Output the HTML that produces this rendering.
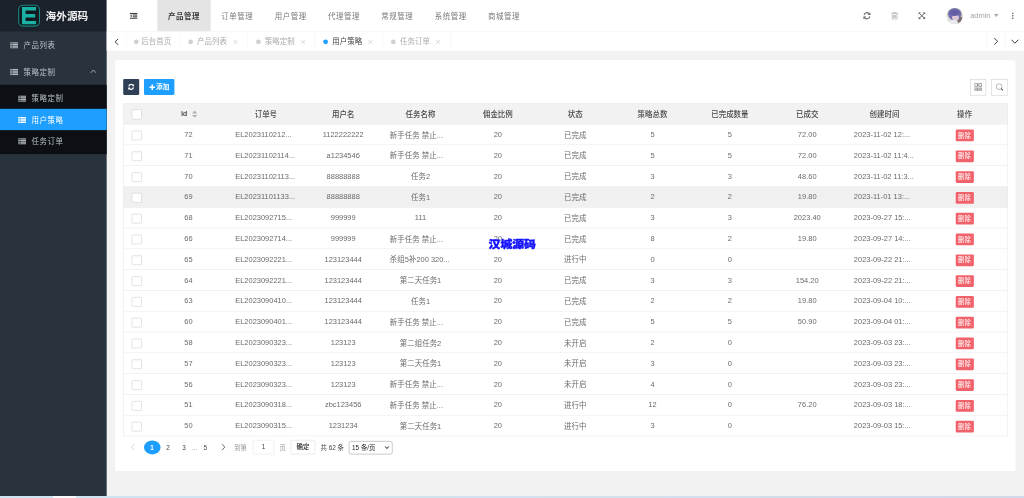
<!DOCTYPE html>
<html lang="zh-CN">
<head>
<meta charset="utf-8">
<title>用户策略</title>
<style>
*{box-sizing:border-box;margin:0;padding:0}
html,body{width:1024px;height:498px;overflow:hidden;background:#f2f2f2}
body{font-family:"Liberation Sans","Noto Sans CJK SC",sans-serif;font-size:14px;color:#666}
#app{filter:blur(0.8px);position:absolute;left:0;top:0;width:1920px;height:936px;transform:scale(0.533333);transform-origin:0 0;background:#f2f2f2;overflow:hidden}
.abs{position:absolute}
i{font-style:normal}
/* sidebar */
#side{position:absolute;left:0;top:-1px;width:200px;height:936px;background:#28333e}
#logo{position:absolute;left:0;top:0;width:200px;height:60px;background:#1b222b}
#logo .box{position:absolute;left:34px;top:10px;width:41px;height:41px;border:2px solid #17877f;border-radius:9px;background:#121a20}
#logo .ttl{position:absolute;left:85.5px;top:1.5px;height:60px;line-height:60px;font-size:20px;font-weight:700;color:#f1f1f1;white-space:nowrap}
.mi{position:absolute;left:0;width:200px;height:50px;line-height:52px;color:#bcc1c7;font-size:14px;white-space:nowrap;letter-spacing:1px}
.mi svg{position:absolute;left:19.3px;top:19.5px}
.mi span{position:absolute;left:44px;top:0}
#sub{position:absolute;left:0;top:160px;width:200px;height:130px;background:#0c0f13}
.si{position:absolute;left:0;width:200px;height:40px;line-height:42px;color:#bcc1c7;font-size:14px;white-space:nowrap;letter-spacing:1px}
.si svg{position:absolute;left:34.3px;top:14.5px}
.si span{position:absolute;left:59px;top:0}
.si.on{background:#1e9fff;color:#fff}
/* header */
#hdr{position:absolute;left:200px;top:-1px;width:1720px;height:60px;background:#fff}
.nav{position:absolute;top:0;width:100px;height:60px;line-height:62px;text-align:center;font-size:14px;letter-spacing:1px;color:#7a7a7a;white-space:nowrap}
.nav.on{background:#e4e4e4;color:#3a3a3a;font-weight:700}
/* tabs */
#tabs{position:absolute;left:200px;top:59px;width:1720px;height:36px;background:#fff;border-top:1px solid #f4f4f4}
.tb{position:absolute;top:0;height:35px;line-height:34px;font-size:14px;color:#acacac;border-right:1px solid #f4f4f4;white-space:nowrap}
.tb .dot{position:absolute;top:13.5px;width:9px;height:9px;border-radius:50%;background:#cfcfcf}
.tb .tx{position:absolute;top:0}
.tb .x{position:absolute;top:13.5px}
.tb.on{color:#444}
.tb.on .dot{background:#1e9fff}
.ctl{position:absolute;top:0;width:35px;height:35px}
/* card */
#card{position:absolute;left:216px;top:113px;width:1688px;height:770px;background:#fff;border-radius:3px}
.btn{position:absolute;top:148px;height:30px;border-radius:2px}
.tool{position:absolute;top:148.5px;width:30px;height:30px;border:1px solid #ccc;border-radius:0;background:#fff}
/* table */
#tbg{position:absolute;left:231px;top:193.5px;width:1659px;height:625px;background:#fff}
#tbg i{position:absolute;left:0;width:1659px;height:1px;background:#e9e9e9}
#tbg .vl{top:0;width:1px;height:625px}
#tbg .hd{top:0;height:39px;background:#f2f2f2}
#tbg .hv{top:156px;height:39px;background:#f0f0f0}
#tbl{position:absolute;left:231px;top:195.2px;width:1659px;border-collapse:collapse;table-layout:fixed;font-size:14px;color:#6a6a6a}
#tbl th,#tbl td{height:39px;text-align:center;white-space:nowrap;font-weight:400;padding:0 0 1px 0}
#tbl th{color:#484848;font-weight:500;height:38px;padding-bottom:2px}
#tbl th .cb{margin-top:3px}
#tbl td.tr{text-align:left;padding-left:15px}
.c0{width:50px;text-align:left!important}
.c11{width:159px;position:relative;left:-2px}
.cb{display:block;width:19px;height:18.5px;border:1px solid #cbcbcb;border-radius:2px;background:#fff;margin:3.5px 0 0 15.5px}
.idh{display:inline-block;position:relative;padding-right:19px;left:1.5px;font-weight:400;-webkit-text-stroke:0.4px #484848}
.sort{position:absolute;right:0;top:2px}
.del{display:inline-block;width:34px;height:22px;line-height:22px;background:#f2626b;color:#fff;font-size:12px;font-weight:400;border-radius:2px;vertical-align:middle;position:relative;top:2.2px;left:0}
/* pager */
#pg{position:absolute;left:231px;top:823px;height:30px;font-size:12px;color:#666;white-space:nowrap}
#pg .a{position:absolute;top:0.7px;height:30px;line-height:30px}
#wm{position:absolute;left:916px;top:446px;font-size:19.5px;font-weight:900;color:#1414ff;white-space:nowrap;line-height:22px;font-family:"Noto Sans CJK SC",sans-serif;transform:scaleX(1.14);transform-origin:0 0;-webkit-text-stroke:0.8px #1414ff}
#taskbar{position:absolute;left:0;top:495.6px;width:1024px;height:3px;background:linear-gradient(90deg,#cde5ef,#d3e2ee 50%,#d2d9e8)}
</style>
</head>
<body>
<div id="app">
  <div id="side">
    <div id="logo">
      <div class="box"><svg class="abs" style="left:5px;top:2px" width="27" height="33" viewBox="0 0 27 33"><path d="M0 0H27V6.5H7V13.2H25V19.7H7V26.5H27V33H0Z" fill="#1ab3a3"/></svg></div>
      <div class="ttl">海外源码</div>
    </div>
    <div class="mi" style="top:60px"><svg width="15" height="12" viewBox="0 0 15 12"><g fill="#b4b9bf"><rect x="0" y="0" width="15" height="2.4"/><rect x="0" y="3.2" width="15" height="2.4"/><rect x="0" y="6.4" width="15" height="2.4"/><rect x="0" y="9.6" width="15" height="2.4"/></g><rect x="3.2" y="0" width="0.9" height="12" fill="#28333e"/></svg><span>产品列表</span></div>
    <div class="mi" style="top:110px"><svg width="15" height="12" viewBox="0 0 15 12"><g fill="#b4b9bf"><rect x="0" y="0" width="15" height="2.4"/><rect x="0" y="3.2" width="15" height="2.4"/><rect x="0" y="6.4" width="15" height="2.4"/><rect x="0" y="9.6" width="15" height="2.4"/></g><rect x="3.2" y="0" width="0.9" height="12" fill="#28333e"/></svg><span>策略定制</span>
      <svg style="left:169px;top:20px" width="12" height="9" viewBox="0 0 12 9"><path d="M1 7.5L6 2.2L11 7.5" fill="none" stroke="#b8bec4" stroke-width="1.6"/></svg></div>
    <div id="sub">
      <div class="si" style="top:5px"><svg width="15" height="12" viewBox="0 0 15 12"><g fill="#b4b9bf"><rect x="0" y="0" width="15" height="2.4"/><rect x="0" y="3.2" width="15" height="2.4"/><rect x="0" y="6.4" width="15" height="2.4"/><rect x="0" y="9.6" width="15" height="2.4"/></g><rect x="3.2" y="0" width="0.9" height="12" fill="#0c0f13"/></svg><span>策略定制</span></div>
      <div class="si on" style="top:45px"><svg width="15" height="12" viewBox="0 0 15 12"><g fill="#fff"><rect x="0" y="0" width="15" height="2.4"/><rect x="0" y="3.2" width="15" height="2.4"/><rect x="0" y="6.4" width="15" height="2.4"/><rect x="0" y="9.6" width="15" height="2.4"/></g><rect x="3.2" y="0" width="0.9" height="12" fill="#1e9fff"/></svg><span>用户策略</span></div>
      <div class="si" style="top:85px"><svg width="15" height="12" viewBox="0 0 15 12"><g fill="#b4b9bf"><rect x="0" y="0" width="15" height="2.4"/><rect x="0" y="3.2" width="15" height="2.4"/><rect x="0" y="6.4" width="15" height="2.4"/><rect x="0" y="9.6" width="15" height="2.4"/></g><rect x="3.2" y="0" width="0.9" height="12" fill="#0c0f13"/></svg><span>任务订单</span></div>
    </div>
  </div>

  <div id="hdr">
    <svg class="abs" style="left:43.4px;top:24.6px" width="14.8" height="11.8" viewBox="0 0 14.8 11.8"><g fill="#3c3c3c"><rect x="0" y="0" width="14.8" height="2.5"/><rect x="0" y="9.3" width="14.8" height="2.5"/></g><g fill="#5a5a5a"><rect x="6" y="3.2" width="8.8" height="2.2"/><rect x="6" y="6.3" width="8.8" height="2.2"/><path d="M4.2 3.2V8.5L0.5 5.85Z"/></g></svg>
    <div class="nav on" style="left:95px">产品管理</div>
    <div class="nav" style="left:195px">订单管理</div>
    <div class="nav" style="left:295px">用户管理</div>
    <div class="nav" style="left:395px">代理管理</div>
    <div class="nav" style="left:495px">常规管理</div>
    <div class="nav" style="left:595px">系统管理</div>
    <div class="nav" style="left:695px">商城管理</div>
    <!-- right icons -->
    <svg class="abs" style="left:1418px;top:23px" width="15" height="15" viewBox="0 0 15 15"><g fill="none" stroke="#666" stroke-width="2"><path d="M2 6.2A5.6 5.6 0 0 1 12.2 4.2"/><path d="M13 8.8A5.6 5.6 0 0 1 2.8 10.8"/></g><path d="M14 1V6H9Z" fill="#5e5e5e"/><path d="M1 14V9H6Z" fill="#5e5e5e"/></svg>
    <svg class="abs" style="left:1471px;top:23px" width="13" height="15" viewBox="0 0 13 15"><g fill="none" stroke="#a8a8a8" stroke-width="1.3"><path d="M0.5 3H12.5"/><path d="M4.3 3V1H8.7V3"/><path d="M1.8 3.2L2.3 14H10.7L11.2 3.2"/><path d="M4.7 5.8V11.6M6.5 5.8V11.6M8.3 5.8V11.6"/></g></svg>
    <svg class="abs" style="left:1522px;top:24px" width="13" height="13" viewBox="0 0 14 14"><path d="M2.5 2.5L11.5 11.5M11.5 2.5L2.5 11.5" stroke="#555" stroke-width="1.9" fill="none"/><g fill="#555"><path d="M0 0H5.2L0 5.2Z"/><path d="M14 0V5.2L8.8 0Z"/><path d="M0 14V8.8L5.2 14Z"/><path d="M14 14H8.8L14 8.8Z"/></g></svg>
    <div class="abs" style="left:1575px;top:15.5px;width:30px;height:30px;border-radius:50%;overflow:hidden;background:#c3cbb9">
      <svg class="abs" style="left:0;top:0" width="30" height="30" viewBox="0 0 30 30"><rect width="30" height="30" fill="#c6cdbd"/><ellipse cx="3" cy="18" rx="5" ry="5" fill="#e3eadc"/><ellipse cx="26" cy="24" rx="6" ry="7" fill="#7d6c70"/><ellipse cx="15" cy="11.5" rx="12.5" ry="11.5" fill="#7670b2"/><ellipse cx="16.5" cy="18" rx="6.3" ry="5.8" fill="#dccad6"/><ellipse cx="15" cy="9" rx="9.5" ry="6" fill="#655fa5"/><ellipse cx="12" cy="28.5" rx="9" ry="6" fill="#ecebf3"/></svg>
    </div>
    <div class="abs" style="left:1619px;top:0;height:60px;line-height:60px;font-size:14px;color:#a3a3a3">admin</div>
    <svg class="abs" style="left:1663px;top:27px" width="10" height="6" viewBox="0 0 10 6"><path d="M0 0H10L5 6Z" fill="#b0b0b0"/></svg>
    <svg class="abs" style="left:1696.5px;top:24px" width="4" height="13" viewBox="0 0 4 13"><g fill="#444"><circle cx="2" cy="1.8" r="1.4"/><circle cx="2" cy="6.5" r="1.4"/><circle cx="2" cy="11.2" r="1.4"/></g></svg>
  </div>

  <div id="tabs">
    <div class="ctl" style="left:0;border-right:1px solid #f4f4f4;width:37px"><svg class="abs" style="left:13.5px;top:11.5px" width="9" height="13" viewBox="0 0 9 13"><path d="M7.5 1L2 6.5L7.5 12" fill="none" stroke="#2b3340" stroke-width="1.8"/></svg></div>
    <div class="tb" style="left:37px;width:100px"><i class="dot" style="left:14px"></i><span class="tx" style="left:28px">后台首页</span></div>
    <div class="tb" style="left:137px;width:127px"><i class="dot" style="left:15.5px"></i><span class="tx" style="left:32.5px">产品列表</span><svg class="x" style="left:99.5px" width="9" height="9" viewBox="0 0 9 9"><path d="M1 1L8 8M8 1L1 8" stroke="#c4c4c4" stroke-width="1.2"/></svg></div>
    <div class="tb" style="left:264px;width:126.5px"><i class="dot" style="left:15.5px"></i><span class="tx" style="left:32.5px">策略定制</span><svg class="x" style="left:99.5px" width="9" height="9" viewBox="0 0 9 9"><path d="M1 1L8 8M8 1L1 8" stroke="#c4c4c4" stroke-width="1.2"/></svg></div>
    <div class="tb on" style="left:390.5px;width:127px"><i class="dot" style="left:15.5px"></i><span class="tx" style="left:32.5px">用户策略</span><svg class="x" style="left:99.5px" width="9" height="9" viewBox="0 0 9 9"><path d="M1 1L8 8M8 1L1 8" stroke="#c4c4c4" stroke-width="1.2"/></svg></div>
    <div class="tb" style="left:517.5px;width:127.5px"><i class="dot" style="left:15.5px"></i><span class="tx" style="left:32.5px">任务订单</span><svg class="x" style="left:99.5px" width="9" height="9" viewBox="0 0 9 9"><path d="M1 1L8 8M8 1L1 8" stroke="#c4c4c4" stroke-width="1.2"/></svg></div>
    <div class="ctl" style="left:1650px;border-left:1px solid #f4f4f4"><svg class="abs" style="left:12px;top:10px" width="9" height="15" viewBox="0 0 9 15"><path d="M1.5 1.5L7.5 7.5L1.5 13.5" fill="none" stroke="#333" stroke-width="1.8"/></svg></div>
    <div class="ctl" style="left:1685px;border-left:1px solid #f4f4f4"><svg class="abs" style="left:9px;top:12.5px" width="16" height="10" viewBox="0 0 16 10"><path d="M1.5 1.5L8 8L14.5 1.5" fill="none" stroke="#333" stroke-width="1.8"/></svg></div>
  </div>

  <div id="card"></div>
  <div class="btn" style="left:231px;width:30px;background:#2f4056"><svg class="abs" style="left:9px;top:9px" width="12" height="12" viewBox="0 0 15 15"><g fill="none" stroke="#fff" stroke-width="3"><path d="M2 6.2A5.6 5.6 0 0 1 12.2 4.2"/><path d="M13 8.8A5.6 5.6 0 0 1 2.8 10.8"/></g><path d="M14.5 0.5V6H9Z" fill="#fff"/><path d="M0.5 14.5V9H6Z" fill="#fff"/></svg></div>
  <div class="btn" style="left:270px;width:57px;background:#1e9fff;color:#fff;font-size:12px;line-height:30px;font-weight:700"><svg class="abs" style="left:9.5px;top:9.5px" width="11" height="11" viewBox="0 0 10 10"><path d="M3.7 0H6.3V3.7H10V6.3H6.3V10H3.7V6.3H0V3.7H3.7Z" fill="#fff"/></svg><span class="abs" style="left:22.5px;top:0;font-size:12.5px">添加</span></div>
  <div class="tool" style="left:1819px"><svg class="abs" style="left:7px;top:6px" width="14" height="15" viewBox="0 0 14 15"><g fill="none" stroke="#555" stroke-width="1.2"><rect x="0.6" y="0.6" width="5" height="5"/><rect x="8.4" y="0.6" width="5" height="5"/><path d="M0.6 8V14.5M3.1 8V14.5M5.6 8V14.5M8.4 8V14.5M10.9 8V14.5M13.4 8V14.5"/></g></svg></div>
  <div class="tool" style="left:1859px"><svg class="abs" style="left:7px;top:6px" width="15" height="15" viewBox="0 0 15 15"><circle cx="6.3" cy="6.3" r="5.4" fill="none" stroke="#888" stroke-width="1.2"/><path d="M10.3 10.3L13.5 13.5" stroke="#555" stroke-width="2.2"/></svg></div>

  <div id="tbg"><i class="hd"></i><i class="hv"></i><i style="top:0px"></i><i style="top:38px"></i><i style="top:77px"></i><i style="top:116px"></i><i style="top:155px"></i><i style="top:194px"></i><i style="top:233px"></i><i style="top:272px"></i><i style="top:311px"></i><i style="top:350px"></i><i style="top:389px"></i><i style="top:428px"></i><i style="top:467px"></i><i style="top:506px"></i><i style="top:545px"></i><i style="top:584px"></i><i style="top:623px"></i><i class="vl" style="left:0"></i><i class="vl" style="left:1658px"></i></div>
  <table id="tbl">
    <thead><tr><th class="c0"><i class="cb"></i></th><th class="c1"><span class="idh">id<svg class="sort" width="10" height="14" viewBox="0 0 10 14"><path d="M0 5.6 L5 0 L10 5.6Z" fill="#b2b2b2"/><path d="M0 8.4 L5 14 L10 8.4Z" fill="#b2b2b2"/></svg></span></th><th class="c2">订单号</th><th class="c3">用户名</th><th class="c4">任务名称</th><th class="c5">佣金比例</th><th class="c6">状态</th><th class="c7">策略总数</th><th class="c8">已完成数量</th><th class="c9">已成交</th><th class="c10">创建时间</th><th class="c11">操作</th></tr></thead>
    <tbody>
<tr><td class="c0"><i class="cb"></i></td><td class="c1">72</td><td class="c2 tr">EL2023110212...</td><td class="c3">1122222222</td><td class="c4 tr">新手任务 禁止...</td><td class="c5">20</td><td class="c6">已完成</td><td class="c7">5</td><td class="c8">5</td><td class="c9">72.00</td><td class="c10 tr">2023-11-02 12:...</td><td class="c11"><span class="del">删除</span></td></tr>
<tr><td class="c0"><i class="cb"></i></td><td class="c1">71</td><td class="c2 tr">EL20231102114...</td><td class="c3">a1234546</td><td class="c4 tr">新手任务 禁止...</td><td class="c5">20</td><td class="c6">已完成</td><td class="c7">5</td><td class="c8">5</td><td class="c9">72.00</td><td class="c10 tr">2023-11-02 11:4...</td><td class="c11"><span class="del">删除</span></td></tr>
<tr><td class="c0"><i class="cb"></i></td><td class="c1">70</td><td class="c2 tr">EL20231102113...</td><td class="c3">88888888</td><td class="c4">任务2</td><td class="c5">20</td><td class="c6">已完成</td><td class="c7">3</td><td class="c8">3</td><td class="c9">48.60</td><td class="c10 tr">2023-11-02 11:3...</td><td class="c11"><span class="del">删除</span></td></tr>
<tr class="hov"><td class="c0"><i class="cb"></i></td><td class="c1">69</td><td class="c2 tr">EL20231101133...</td><td class="c3">88888888</td><td class="c4">任务1</td><td class="c5">20</td><td class="c6">已完成</td><td class="c7">2</td><td class="c8">2</td><td class="c9">19.80</td><td class="c10 tr">2023-11-01 13:...</td><td class="c11"><span class="del">删除</span></td></tr>
<tr><td class="c0"><i class="cb"></i></td><td class="c1">68</td><td class="c2 tr">EL2023092715...</td><td class="c3">999999</td><td class="c4">111</td><td class="c5">20</td><td class="c6">已完成</td><td class="c7">3</td><td class="c8">3</td><td class="c9">2023.40</td><td class="c10 tr">2023-09-27 15:...</td><td class="c11"><span class="del">删除</span></td></tr>
<tr><td class="c0"><i class="cb"></i></td><td class="c1">66</td><td class="c2 tr">EL2023092714...</td><td class="c3">999999</td><td class="c4 tr">新手任务 禁止...</td><td class="c5">20</td><td class="c6">已完成</td><td class="c7">8</td><td class="c8">2</td><td class="c9">19.80</td><td class="c10 tr">2023-09-27 14:...</td><td class="c11"><span class="del">删除</span></td></tr>
<tr><td class="c0"><i class="cb"></i></td><td class="c1">65</td><td class="c2 tr">EL2023092221...</td><td class="c3">123123444</td><td class="c4 tr">杀组5补200 320...</td><td class="c5">20</td><td class="c6">进行中</td><td class="c7">0</td><td class="c8">0</td><td class="c9"></td><td class="c10 tr">2023-09-22 21:...</td><td class="c11"><span class="del">删除</span></td></tr>
<tr><td class="c0"><i class="cb"></i></td><td class="c1">64</td><td class="c2 tr">EL2023092221...</td><td class="c3">123123444</td><td class="c4">第二天任务1</td><td class="c5">20</td><td class="c6">已完成</td><td class="c7">3</td><td class="c8">3</td><td class="c9">154.20</td><td class="c10 tr">2023-09-22 21:...</td><td class="c11"><span class="del">删除</span></td></tr>
<tr><td class="c0"><i class="cb"></i></td><td class="c1">63</td><td class="c2 tr">EL2023090410...</td><td class="c3">123123444</td><td class="c4">任务1</td><td class="c5">20</td><td class="c6">已完成</td><td class="c7">2</td><td class="c8">2</td><td class="c9">19.80</td><td class="c10 tr">2023-09-04 10:...</td><td class="c11"><span class="del">删除</span></td></tr>
<tr><td class="c0"><i class="cb"></i></td><td class="c1">60</td><td class="c2 tr">EL2023090401...</td><td class="c3">123123444</td><td class="c4 tr">新手任务 禁止...</td><td class="c5">20</td><td class="c6">已完成</td><td class="c7">5</td><td class="c8">5</td><td class="c9">50.90</td><td class="c10 tr">2023-09-04 01:...</td><td class="c11"><span class="del">删除</span></td></tr>
<tr><td class="c0"><i class="cb"></i></td><td class="c1">58</td><td class="c2 tr">EL2023090323...</td><td class="c3">123123</td><td class="c4">第二组任务2</td><td class="c5">20</td><td class="c6">未开启</td><td class="c7">2</td><td class="c8">0</td><td class="c9"></td><td class="c10 tr">2023-09-03 23:...</td><td class="c11"><span class="del">删除</span></td></tr>
<tr><td class="c0"><i class="cb"></i></td><td class="c1">57</td><td class="c2 tr">EL2023090323...</td><td class="c3">123123</td><td class="c4">第二天任务1</td><td class="c5">20</td><td class="c6">未开启</td><td class="c7">3</td><td class="c8">0</td><td class="c9"></td><td class="c10 tr">2023-09-03 23:...</td><td class="c11"><span class="del">删除</span></td></tr>
<tr><td class="c0"><i class="cb"></i></td><td class="c1">56</td><td class="c2 tr">EL2023090323...</td><td class="c3">123123</td><td class="c4 tr">新手任务 禁止...</td><td class="c5">20</td><td class="c6">未开启</td><td class="c7">4</td><td class="c8">0</td><td class="c9"></td><td class="c10 tr">2023-09-03 23:...</td><td class="c11"><span class="del">删除</span></td></tr>
<tr><td class="c0"><i class="cb"></i></td><td class="c1">51</td><td class="c2 tr">EL2023090318...</td><td class="c3">zbc123456</td><td class="c4 tr">新手任务 禁止...</td><td class="c5">20</td><td class="c6">进行中</td><td class="c7">12</td><td class="c8">0</td><td class="c9">76.20</td><td class="c10 tr">2023-09-03 18:...</td><td class="c11"><span class="del">删除</span></td></tr>
<tr><td class="c0"><i class="cb"></i></td><td class="c1">50</td><td class="c2 tr">EL2023090315...</td><td class="c3">1231234</td><td class="c4">第二天任务1</td><td class="c5">20</td><td class="c6">进行中</td><td class="c7">3</td><td class="c8">0</td><td class="c9"></td><td class="c10 tr">2023-09-03 15:...</td><td class="c11"><span class="del">删除</span></td></tr>
    </tbody>
  </table>

  <div id="wm">汉城源码</div>

  <div id="pg">
    <svg class="abs" style="left:14px;top:9px" width="8" height="13" viewBox="0 0 8 13"><path d="M6.5 1L1.5 6.5L6.5 12" fill="none" stroke="#c8c8c8" stroke-width="1.4"/></svg>
    <div class="a" style="left:38.5px;top:2.5px;width:31px;height:26.5px;line-height:26px;border-radius:50%;background:#1e9fff;color:#fff;text-align:center;font-weight:700">1</div>
    <div class="a" style="left:69px;width:30px;text-align:center;color:#444">2</div>
    <div class="a" style="left:99px;width:30px;text-align:center;color:#444">3</div>
    <div class="a" style="left:125px;width:18px;text-align:center;color:#888">...</div>
    <div class="a" style="left:139px;width:30px;text-align:center;color:#444">5</div>
    <svg class="abs" style="left:184px;top:9px" width="8" height="13" viewBox="0 0 8 13"><path d="M1.5 1L6.5 6.5L1.5 12" fill="none" stroke="#444" stroke-width="1.5"/></svg>
    <div class="a" style="left:208px;color:#999">到第</div>
    <div class="a" style="left:243px;top:2px;width:40px;height:27px;line-height:25px;border:1px solid #e4e4e4;border-radius:2px;text-align:center;color:#444">1</div>
    <div class="a" style="left:293px;color:#999">页</div>
    <div class="a" style="left:314px;top:2px;width:46px;height:27px;line-height:25px;border:1px solid #dcdcdc;border-radius:2px;text-align:center;color:#222;font-weight:500">确定</div>
    <div class="a" style="left:370px;color:#444">共 62 条</div>
    <div class="a" style="left:423px;top:3.5px;width:82px;height:25px;line-height:23px;border:1px solid #9a9a9a;border-radius:4px;color:#222;padding-left:5px">15 条/页<svg class="abs" style="right:5px;top:8px" width="9" height="7" viewBox="0 0 9 7"><path d="M1 1L4.5 5L8 1" fill="none" stroke="#111" stroke-width="1.8"/></svg></div>
  </div>
</div>
<div id="taskbar"><i class="abs" style="left:53px;top:0;width:23px;height:3px;background:#f6fafc"></i></div>
</body>
</html>
